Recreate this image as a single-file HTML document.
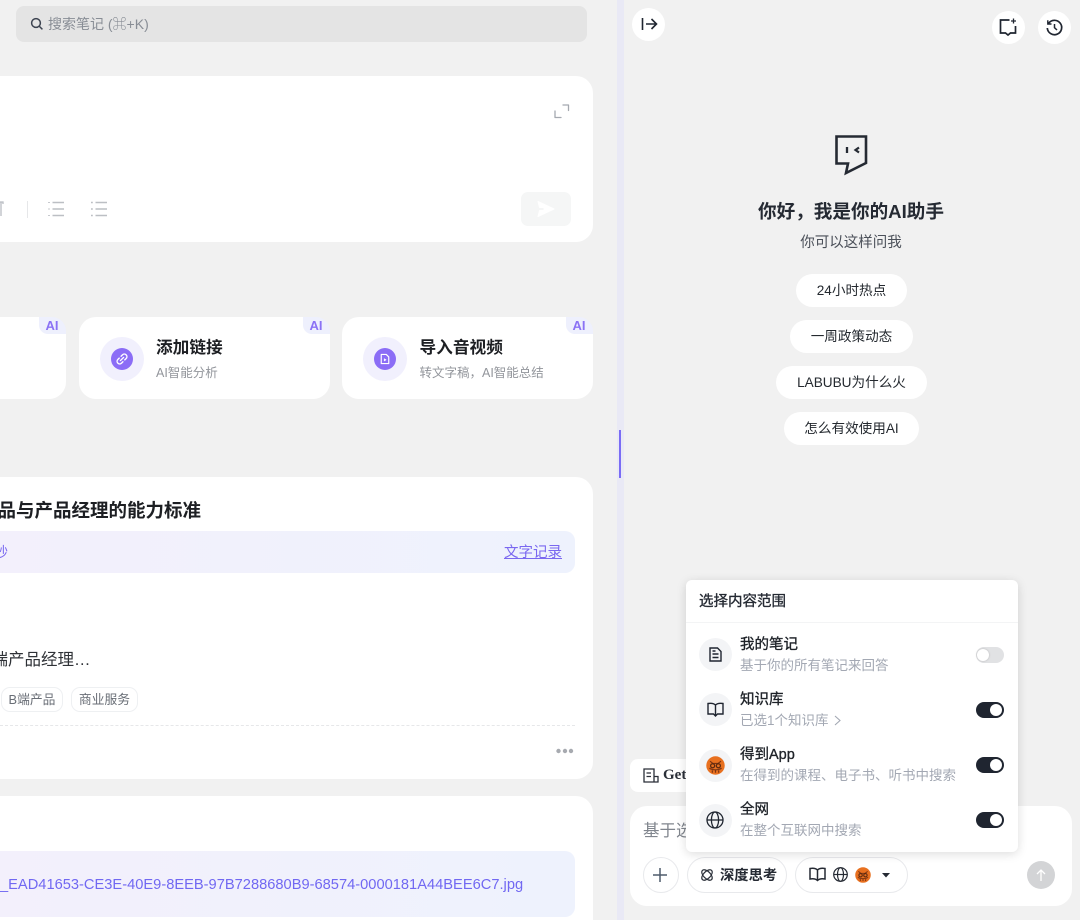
<!DOCTYPE html>
<html lang="zh"><head><meta charset="utf-8"><title>AI助手</title>
<style>
html,body{margin:0;padding:0;width:1080px;height:920px;overflow:hidden;background:#f1f1f1}
#w{position:absolute;left:0;top:0;width:1080px;height:920px;overflow:hidden;background:#f1f1f1;font-family:"Liberation Sans","Noto Sans CJK SC",sans-serif;color:#1f2329;filter:blur(.3px)}
.a{position:absolute;white-space:nowrap}
.c{position:absolute;background:#fff}
.b{font-weight:700}
.m{-webkit-text-stroke:.35px currentColor}
svg{position:absolute;overflow:visible}
.ai{position:absolute;width:27px;height:17px;top:317px;background:#eef0fd;border-radius:0 14px 0 9px;color:#8b72f5;font-size:13px;font-weight:700;text-align:center;line-height:17px;text-indent:-1px}
.ci{position:absolute;width:44px;height:44px;top:337px;border-radius:50%;background:#f1f0fd}
.pill{position:absolute;background:#fff;border-radius:17px;height:33px;line-height:33px;text-align:center;font-size:13.6px;color:#24292f}
.ic{position:absolute;left:699px;width:33px;height:33px;border-radius:50%;background:#f3f4f6}
.t{position:absolute;width:28px;height:16px;left:976px;border-radius:8px;background:#1f2530}
.t i{position:absolute;right:2px;top:2px;width:12px;height:12px;border-radius:50%;background:#fff}
.rb{position:absolute;width:33px;height:33px;border-radius:50%;background:#fff}
.grad{position:absolute;background:linear-gradient(90deg,#f3f0fc,#eef2fd);border-radius:0 10px 10px 0}
.tag{position:absolute;background:#fff;top:687px;height:23px;border:1px solid #eef0f2;border-radius:9px;text-align:center;font-size:12.8px;line-height:23px;color:#696e76;white-space:nowrap}
.ti{left:740px;font-size:14.5px;line-height:20px;color:#1f2329}
.su{left:740px;font-size:13.5px;line-height:18px;color:#a3a8b3}
</style></head><body><div id="w">

<!-- search -->
<div class="c" style="left:16px;top:6px;width:571px;height:36px;background:#e4e4e4;border-radius:8px"></div>
<svg style="left:30px;top:17px" width="14" height="14" viewBox="0 0 14 14" fill="none" stroke="#3c4350" stroke-width="1.5"><circle cx="6" cy="6" r="4.4"/><path d="M9.4 9.4L12.4 12.4"/></svg>
<div class="a" style="left:48px;top:14px;font-size:14px;line-height:20px;color:#888d95">搜索笔记 (⌘+K)</div>

<!-- editor card -->
<div class="c" style="left:-20px;top:76px;width:613px;height:166px;border-radius:17px"></div>
<svg style="left:554px;top:104px" width="16" height="16" viewBox="0 0 16 16" fill="none" stroke="#a5a9b0" stroke-width="1.300" stroke-linecap="round" stroke-linejoin="round"><path d="M1 7V13.500H7M9 1H14.500V6.500"/></svg>
<svg style="left:0;top:201px" width="4" height="16" viewBox="0 0 4 16" fill="none" stroke="#b9bcc2" stroke-width="1.300"><path d="M-2 1H3V3M1 1V15"/></svg>
<div class="c" style="left:27px;top:201px;width:1px;height:17px;background:#e6e7e9"></div>
<svg style="left:48px;top:201px" width="16" height="17" viewBox="0 0 16 17" stroke="#bcbfc4" stroke-width="1.600" fill="none"><path d="M4.500 1.500H16M4.500 8H16M4.500 14.500H16"/><path d="M0 1.500H2M0 8H2M0 14.500H2" stroke-width="1.100" stroke="#c7c9ce"/></svg>
<svg style="left:91px;top:201px" width="16" height="17" viewBox="0 0 16 17" stroke="#bcbfc4" stroke-width="1.600" fill="none"><path d="M4.500 1.500H16M4.500 8H16M4.500 14.500H16"/><path d="M0 1.500H1.800M0 8H1.800M0 14.500H1.800"/></svg>
<div class="c" style="left:521px;top:192px;width:50px;height:34px;border-radius:7px;background:#f5f6f6"></div>
<svg style="left:537px;top:200px" width="18" height="18" viewBox="0 0 18 18"><path d="M1 1.500L17 9L1 16.500L2.500 10.500H7V7.500H2.500Z" fill="#fff" stroke="#fff" stroke-linejoin="round"/></svg>

<!-- shortcut cards -->
<div class="c" style="left:-20px;top:317px;width:86px;height:82px;border-radius:17px"></div>
<div class="ai" style="left:39px">AI</div>
<div class="c" style="left:79px;top:317px;width:251px;height:82px;border-radius:17px"></div>
<div class="ai" style="left:303px">AI</div>
<div class="ci" style="left:99.500px"></div>
<div class="c" style="left:110.500px;top:347.500px;width:22px;height:22px;border-radius:50%;background:#8b6df6"></div>
<svg style="left:115.500px;top:352.500px" width="12" height="12" viewBox="0 0 13 13" fill="none" stroke="#fff" stroke-width="1.500" stroke-linecap="round"><path d="M5.500 3.500L7 2A2.500 2.500 0 0 1 11 6L9.500 7.500M7.500 9.500L6 11A2.500 2.500 0 0 1 2 7L3.500 5.500M4.800 8.200L8.200 4.800"/></svg>
<div class="a b" style="left:156px;top:335.500px;font-size:16.700px;line-height:24px;color:#1d1f23">添加链接</div>
<div class="a" style="left:156px;top:364px;font-size:12.500px;line-height:18px;color:#92959b">AI智能分析</div>

<div class="c" style="left:342px;top:317px;width:251px;height:82px;border-radius:17px"></div>
<div class="ai" style="left:566px">AI</div>
<div class="ci" style="left:363px"></div>
<div class="c" style="left:374px;top:347.500px;width:22px;height:22px;border-radius:50%;background:#8b6df6"></div>
<svg style="left:380px;top:352.500px" width="10" height="12" viewBox="0 0 12 13" fill="none" stroke="#fff" stroke-width="1.400"><path d="M1.500 1H7.500L10.500 4V12H1.500Z" stroke-linejoin="round"/><path d="M5 6L7.500 7.500L5 9Z" fill="#fff" stroke-width=".6"/></svg>
<div class="a b" style="left:419.500px;top:335.500px;font-size:16.700px;line-height:24px;color:#1d1f23">导入音视频</div>
<div class="a" style="left:419.500px;top:364px;font-size:12.500px;line-height:18px;color:#92959b">转文字稿，AI智能总结</div>

<!-- note card 1 -->
<div class="c" style="left:-20px;top:477px;width:613px;height:302px;border-radius:17px"></div>
<div class="a b" style="left:-17px;top:498px;width:218px;text-align:right;overflow:hidden;font-size:18.500px;line-height:26px;color:#1d1f23">品与产品经理的能力标准</div>
<div class="grad" style="left:0;top:531px;width:575px;height:42px"></div>
<div class="a" style="left:-6px;top:542px;font-size:14px;line-height:20px;color:#7a68f0">秒</div>
<div class="a" style="left:504px;top:543px;font-size:14.500px;line-height:20px;color:#7a68f0;text-decoration:underline">文字记录</div>
<div class="a" style="left:-8.500px;top:648px;font-size:16.500px;line-height:24px;color:#2f3237">端产品经理…</div>
<div class="tag" style="left:1px;width:60px">B端产品</div>
<div class="tag" style="left:71px;width:65px">商业服务</div>
<div class="c" style="left:0;top:725px;width:575px;height:0;border-top:1px dashed #e6e7e9"></div>
<svg style="left:556px;top:748px" width="18" height="6" fill="#a7aab0"><circle cx="2.500" cy="3" r="2.200"/><circle cx="9" cy="3" r="2.200"/><circle cx="15" cy="3" r="2.200"/></svg>

<!-- note card 2 -->
<div class="c" style="left:-20px;top:796px;width:613px;height:124px;border-radius:17px 17px 0 0"></div>
<div class="grad" style="left:0;top:851px;width:575px;height:66px"></div>
<div class="a" style="left:0;top:876px;font-size:14.660px;line-height:18px;color:#7168f2">_EAD41653-CE3E-40E9-8EEB-97B7288680B9-68574-0000181A44BEE6C7.jpg</div>

<!-- divider -->
<div class="c" style="left:617px;top:0;width:7px;height:920px;background:#e9e9f5"></div>
<div class="c" style="left:619px;top:430px;width:2px;height:48px;background:#7a6cf5"></div>

<!-- right header -->
<div class="rb" style="left:632px;top:8px"></div>
<svg style="left:641px;top:16px" width="17" height="16" viewBox="0 0 17 16" fill="none" stroke="#1f2530" stroke-width="1.600"><path d="M1.500 2V14M5 8H15.500M10.500 3L15.500 8L10.500 13"/></svg>
<div class="rb" style="left:992px;top:11px"></div>
<svg style="left:999px;top:18px" width="18" height="18" viewBox="0 0 18 18" fill="none" stroke="#1f2530" stroke-width="1.700"><path d="M10.500 2H1.500V15H6.500L9 17L11.500 15H16.500V8"/><path d="M14.500 .5V5.500M12 3H17" stroke-width="1.300"/></svg>
<div class="rb" style="left:1038px;top:11px"></div>
<svg style="left:1045px;top:17.500px" width="19" height="19" viewBox="0 0 19 19" fill="none" stroke="#1f2530" stroke-width="1.700"><path d="M3.500 5.500A7.200 7.200 0 1 1 2.300 10"/><path d="M2.800 2.300V6H6.500" stroke-width="1.400"/><path d="M9.500 6V9.700L12 12" stroke-width="1.500"/></svg>

<!-- assistant greeting -->
<svg style="left:835px;top:135px" width="33" height="40" viewBox="0 0 33 40" fill="none" stroke="#252a33" stroke-width="2.600"><path d="M1.500 1.500H31V28L11 38L13 28.500H1.500Z"/><path d="M12 12V18" stroke-width="2.300"/><path d="M24 12.500L20.500 15L24 17.500" stroke-width="2.200"/></svg>
<div class="a b" style="left:620px;width:462px;text-align:center;top:199px;font-size:18.600px;line-height:26px;color:#252a33">你好，我是你的AI助手</div>
<div class="a" style="left:620px;width:462px;text-align:center;top:233px;font-size:14.500px;line-height:20px;color:#4b5059">你可以这样问我</div>
<div class="pill" style="left:796px;top:274px;width:111px">24小时热点</div>
<div class="pill" style="left:790px;top:320px;width:123px">一周政策动态</div>
<div class="pill" style="left:776px;top:366px;width:151px">LABUBU为什么火</div>
<div class="pill" style="left:784px;top:412px;width:135px">怎么有效使用AI</div>

<!-- Get tab + input -->
<div class="c" style="left:630px;top:759px;width:80px;height:33px;border-radius:8px"></div>
<svg style="left:643px;top:768px" width="16" height="15" viewBox="0 0 16 15" fill="none" stroke="#2a2f38" stroke-width="1.300"><path d="M11 14H1V1H11V14H15V8.500H11M3.500 5H8M3.500 8.500H8"/></svg>
<div class="a" style="left:663px;top:766px;font-family:'Liberation Serif',serif;font-weight:700;font-size:15px;line-height:18px;color:#2a2f38">Get</div>
<div class="c" style="left:630px;top:806px;width:442px;height:100px;border-radius:17px"></div>
<div class="a" style="left:643px;top:820px;font-size:16.500px;line-height:22px;color:#80858d">基于选</div>
<div class="c" style="left:643px;top:857px;width:34px;height:34px;border:1px solid #e8e9ec;border-radius:50%"></div>
<svg style="left:653px;top:868px" width="14" height="14" stroke="#4f5b6c" stroke-width="1.500"><path d="M7 0V14M0 7H14"/></svg>
<div class="c" style="left:687px;top:857px;width:98px;height:34px;border:1px solid #e8e9ec;border-radius:18px"></div>
<svg style="left:700px;top:868px" width="14" height="14" viewBox="0 0 14 14" fill="none" stroke="#2a2f38" stroke-width="1.200"><ellipse cx="7" cy="7" rx="6.500" ry="3.500" transform="rotate(45 7 7)"/><ellipse cx="7" cy="7" rx="6.500" ry="3.500" transform="rotate(-45 7 7)"/></svg>
<div class="a b" style="left:720px;top:866px;font-size:14.300px;line-height:20px;color:#252a33">深度思考</div>
<div class="c" style="left:795px;top:857px;width:111px;height:34px;border:1px solid #e8e9ec;border-radius:18px"></div>
<svg style="left:809px;top:867px" width="17" height="15" viewBox="0 0 17 15" fill="none" stroke="#252a33" stroke-width="1.500"><path d="M8.500 3C7 1.500 4 1 1 1.500V12C4 11.500 7 12 8.500 13.500C10 12 13 11.500 16 12V1.500C13 1 10 1.500 8.500 3ZM8.500 3V13.500"/></svg>
<svg style="left:833px;top:867px" width="15" height="15" viewBox="0 0 15 15" fill="none" stroke="#252a33" stroke-width="1.200"><circle cx="7.500" cy="7.500" r="6.800"/><ellipse cx="7.500" cy="7.500" rx="3" ry="6.800"/><path d="M.7 7.500H14.300"/></svg>
<svg style="left:855px;top:867px" width="16" height="16" viewBox="0 0 33 33" fill="none"><circle cx="16.500" cy="16.500" r="16" fill="#e8701f"/><path d="M7 9L12 13H21L26 9M6 21C9 24 13 24 16.500 24S24 24 27 21M16.500 24V29M11 25V29M22 25V29" stroke="#7b3412" stroke-width="2"/><circle cx="11.500" cy="17" r="3.500" stroke="#5c2a10" stroke-width="2.200"/><circle cx="21.500" cy="17" r="3.500" stroke="#5c2a10" stroke-width="2.200"/></svg>
<svg style="left:882px;top:873px" width="8" height="5"><path d="M0 0H8L4 4.500Z" fill="#252a33"/></svg>
<div class="c" style="left:1027px;top:861px;width:28px;height:28px;border-radius:50%;background:#d3d4d6"></div>
<svg style="left:1036px;top:869px" width="10" height="12" fill="none" stroke="#fff" stroke-width="1.300"><path d="M5 12V1M1 5L5 1L9 5"/></svg>

<!-- popup -->
<div class="c" style="left:686px;top:580px;width:332px;height:272px;border-radius:6px;box-shadow:0 2px 10px rgba(0,0,0,.14)"></div>
<div class="a m" style="left:699px;top:592px;font-size:14.500px;line-height:20px;color:#252a33">选择内容范围</div>
<div class="c" style="left:686px;top:622px;width:332px;height:1px;background:#f3f4f5"></div>

<div class="ic" style="top:638px"></div>
<svg style="left:709px;top:647px" width="13" height="15" viewBox="0 0 13 15" fill="none" stroke="#1f2530" stroke-width="1.400"><path d="M1 1H8.500L12 4.500V14H1ZM3.500 7H9.500M3.500 10.500H9.500M3.500 4H6.500"/></svg>
<div class="a m ti" style="top:635px">我的笔记</div>
<div class="a su" style="top:657px">基于你的所有笔记来回答</div>
<div class="t" style="top:647px;background:#e1e2e4"><i style="right:auto;left:1px;box-shadow:0 0 2px rgba(0,0,0,.2)"></i></div>

<div class="ic" style="top:693px"></div>
<svg style="left:707px;top:702px" width="17" height="16" viewBox="0 0 17 16" fill="none" stroke="#1f2530" stroke-width="1.400"><path d="M8.500 3C7 1.500 4 1 1 1.500V12H6.500L8.500 14L10.500 12H16V1.500C13 1 10 1.500 8.500 3ZM8.500 3V13"/></svg>
<div class="a m ti" style="top:690px">知识库</div>
<div class="a su" style="top:712px">已选1个知识库</div>
<svg style="left:834px;top:715px" width="7" height="11" fill="none" stroke="#a3a8b3" stroke-width="1.100"><path d="M1 1L6 5.500L1 10"/></svg>
<div class="t" style="top:702px"><i></i></div>

<div class="ic" style="top:749px"></div>
<svg style="left:706px;top:756px" width="19" height="19" viewBox="0 0 33 33" fill="none"><circle cx="16.500" cy="16.500" r="16" fill="#e8701f"/><path d="M7 9L12 13H21L26 9M6 21C9 24 13 24 16.500 24S24 24 27 21M16.500 24V29M11 25V29M22 25V29" stroke="#7b3412" stroke-width="2"/><circle cx="11.500" cy="17" r="3.500" stroke="#5c2a10" stroke-width="2.200"/><circle cx="21.500" cy="17" r="3.500" stroke="#5c2a10" stroke-width="2.200"/></svg>
<div class="a m ti" style="top:745px">得到App</div>
<div class="a su" style="top:767px">在得到的课程、电子书、听书中搜索</div>
<div class="t" style="top:757px"><i></i></div>

<div class="ic" style="top:804px"></div>
<svg style="left:706px;top:811px" width="18" height="18" viewBox="0 0 18 18" fill="none" stroke="#1f2530" stroke-width="1.300"><circle cx="9" cy="9" r="8"/><ellipse cx="9" cy="9" rx="3.600" ry="8"/><path d="M1 9H17"/></svg>
<div class="a m ti" style="top:800px">全网</div>
<div class="a su" style="top:822px">在整个互联网中搜索</div>
<div class="t" style="top:812px"><i></i></div>

</div></body></html>
